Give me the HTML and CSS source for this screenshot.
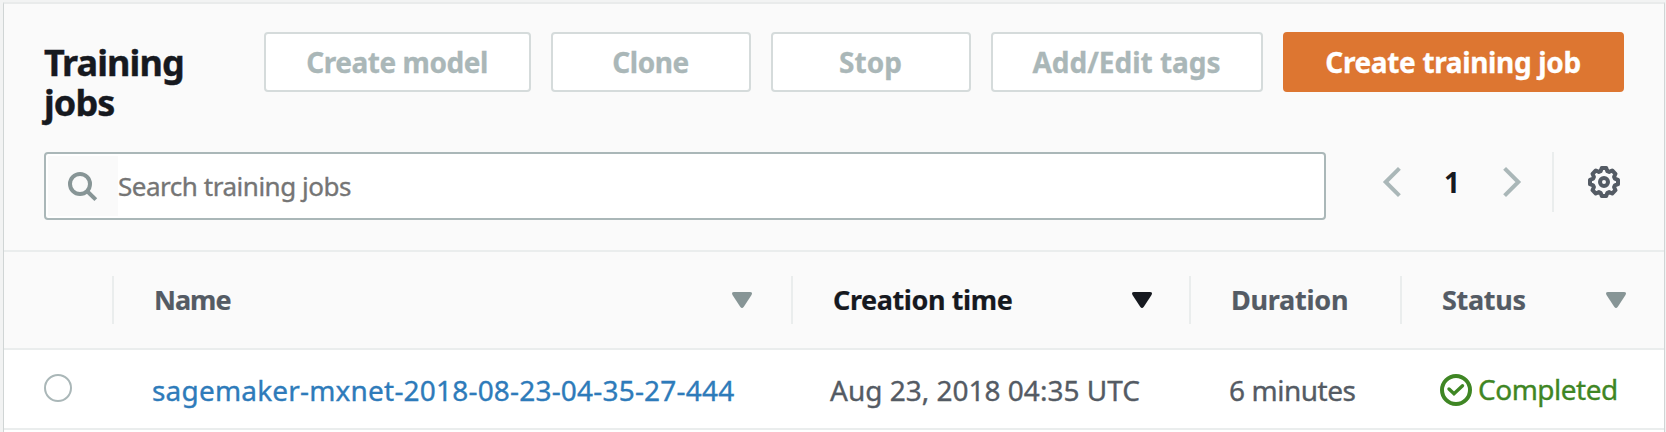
FILE: index.html
```
<!DOCTYPE html>
<html lang="en">
<head>
<meta charset="utf-8">
<title>Training jobs</title>
<link rel="stylesheet" href="styles.css">
</head>
<body>
<main class="panel">
  <header class="toolbar">
    <div class="top">
      <h1 class="title">Training jobs</h1>
      <div class="actions">
        <button class="btn model" disabled>Create model</button>
        <button class="btn clone" disabled>Clone</button>
        <button class="btn stop" disabled>Stop</button>
        <button class="btn tags" disabled>Add/Edit tags</button>
        <button class="btn primary">Create training job</button>
      </div>
    </div>
    <div class="tools">
      <div class="search">
        <span class="search-icon">
          <svg width="30" height="30" viewBox="0 0 30 30" fill="none" stroke="#879596" stroke-width="4"><circle cx="12" cy="12" r="10"/><path d="M19.2 19.2l8.6 8.4"/></svg>
        </span>
        <input class="search-input" type="text" placeholder="Search training jobs">
      </div>
      <nav class="pager">
        <svg class="prev" width="18" height="30" viewBox="0 0 18 30" fill="none" stroke="#aab7b8" stroke-width="4"><path d="M16.4 1.3L2.7 15l13.7 13.7"/></svg>
        <span class="page">1</span>
        <svg class="next" width="18" height="30" viewBox="0 0 18 30" fill="none" stroke="#aab7b8" stroke-width="4"><path d="M1.6 1.3L15.3 15 1.6 28.7"/></svg>
      </nav>
      <div class="settings">
        <svg width="32" height="32" viewBox="0 0 32 32" fill="none" stroke="#545b64" stroke-width="4" stroke-linejoin="round"><path d="M13.8 2h4.4l1.2 3.2 1.7.7 3.1-1.4 3.3 3.3-1.4 3.1.7 1.7L30 13.8v4.4l-3.2 1.2-.7 1.7 1.4 3.1-3.3 3.3-3.1-1.4-1.7.7L18.2 30h-4.4l-1.2-3.2-1.7-.7-3.1 1.4-3.3-3.3 1.4-3.1-.7-1.7L2 18.2v-4.4l3.2-1.2.7-1.7-1.4-3.1 3.3-3.3 3.1 1.4 1.7-.7z"/><circle cx="16" cy="16" r="4"/></svg>
      </div>
    </div>
  </header>
  <div class="row head">
    <div class="cell"></div>
    <div class="cell name"><span>Name</span><svg class="sort" width="20" height="16" viewBox="0 0 20 16"><path d="M2 0h16q3 0 1.500 3l-7.700 11.800q-1.800 2.400-3.600 0L.5 3Q-1 0 2 0z"/></svg></div>
    <div class="cell created"><span>Creation time</span><svg class="sort" width="20" height="16" viewBox="0 0 20 16"><path d="M2 0h16q3 0 1.500 3l-7.700 11.800q-1.800 2.400-3.600 0L.5 3Q-1 0 2 0z"/></svg></div>
    <div class="cell duration"><span>Duration</span></div>
    <div class="cell status"><span>Status</span><svg class="sort" width="20" height="16" viewBox="0 0 20 16"><path d="M2 0h16q3 0 1.500 3l-7.700 11.800q-1.800 2.400-3.600 0L.5 3Q-1 0 2 0z"/></svg></div>
  </div>
  <div class="row job">
    <div class="select"><span class="radio"></span></div>
    <a class="link">sagemaker-mxnet-2018-08-23-04-35-27-444</a>
    <div class="time">Aug 23, 2018 04:35 UTC</div>
    <div class="minutes">6 minutes</div>
    <div class="done">
      <svg width="32" height="32" viewBox="0 0 32 32" fill="none" stroke="#3f8624" stroke-width="4"><circle cx="16" cy="16" r="14"/><path d="M9 15l5 4.700 8.500-8" stroke-linecap="round" stroke-width="3.400"/></svg>
      <span>Completed</span>
    </div>
  </div>
</main>
</body>
</html>
```
FILE: styles.css
```
* { box-sizing: border-box; }

body {
  margin: 0;
  height: 432px;
  overflow: hidden;
  padding: 2px 1px 0 3px;
  background: #f2f3f3;
  font-family: "Noto Sans", sans-serif;
  font-size: 28px;
  color: #545b64;
}

svg { display: block; flex: none; overflow: visible; }

.panel {
  height: 440px;
  border: 1px solid #d0d5d5;
  border-width: 2px 1px 0;
  border-top-color: #e9ebeb;
  background: #fff;
}

.toolbar {
  height: 248px;
  padding: 28px 40px 0;
  background: #fafafa;
  border-bottom: 2px solid #eaeded;
}

.top { display: flex; justify-content: space-between; height: 120px; }

.title {
  width: 160px;
  margin: 0;
  padding-top: 11px;
  font-size: 36px;
  line-height: 40px;
  letter-spacing: -0.9px;
  color: #16191f;
  -webkit-text-stroke: 0.4px;
}

.actions { display: flex; gap: 20px; }

.btn {
  height: 60px;
  padding: 0 1px 1px 0;
  border: 2px solid #d5dbdb;
  border-radius: 4px;
  background: #fff;
  color: #aab7b8;
  font: 700 28px "Noto Sans", sans-serif;
  -webkit-text-stroke: 0.3px;
}
.model { width: 267px; letter-spacing: -0.45px; }
.clone { width: 200px; letter-spacing: -0.4px; }
.stop { width: 200px; }
.tags { width: 272px; }
.primary {
  width: 341px;
  border-color: #dd7631;
  background: #dd7631;
  color: #fff;
  letter-spacing: -0.35px;
}

.tools { display: flex; }

.search {
  display: flex;
  width: 1282px;
  height: 68px;
  padding: 2px;
  border: 2px solid #aab7b8;
  border-radius: 4px;
  background: #fff;
}
.search-icon {
  width: 70px;
  padding: 16px 0 0 20px;
  background: #fafafa;
}
.search-input {
  flex: 1;
  padding: 0;
  border: 0;
  outline: 0;
  background: transparent;
  font: 26px "Noto Sans", sans-serif;
  letter-spacing: -0.47px;
  -webkit-text-stroke: 0.35px;
}
.search-input::placeholder { color: #757575; opacity: 1; }

.pager {
  display: flex;
  align-items: center;
  justify-content: space-between;
  width: 138px;
  height: 60px;
  margin-left: 57px;
}
.page { padding-bottom: 1px; color: #16191f; font-weight: 700; }

.settings {
  display: flex;
  align-items: center;
  height: 60px;
  margin-left: 31px;
  padding-left: 34px;
  border-left: 2px solid #eaeded;
}

.row {
  display: grid;
  grid-template-columns: 108px 679px 398px 211px 264px;
  border-bottom: 2px solid #eaeded;
}

.head {
  height: 98px;
  align-items: center;
  background: #fafafa;
  font-size: 27px;
  font-weight: 700;
  -webkit-text-stroke: 0.2px;
}
.cell {
  display: flex;
  align-items: center;
  justify-content: space-between;
  height: 48px;
}
.cell span { padding-bottom: 2px; }
.cell + .cell { padding: 0 39px 0 40px; border-left: 2px solid #eaeded; }
.sort { fill: #879596; }
.cell.name { letter-spacing: -1px; }
.cell.created { padding-right: 37px; color: #16191f; letter-spacing: -0.4px; }
.created .sort { fill: #16191f; }
.cell.duration { letter-spacing: -0.25px; }
.cell.status { padding-right: 38px; letter-spacing: -0.3px; }

.job {
  height: 80px;
  padding-top: 2px;
  line-height: 76px;
  -webkit-text-stroke: 0.35px;
}
.select { padding: 22px 0 0 40px; }
.radio {
  display: block;
  width: 28px;
  height: 28px;
  border: 2px solid #aab7b8;
  border-radius: 50%;
}
.link { padding-left: 40px; color: #2e7bba; letter-spacing: 0.19px; white-space: nowrap; }
.time { padding-left: 39px; }
.minutes { padding-left: 40px; letter-spacing: -0.45px; }
.done {
  display: flex;
  align-items: flex-start;
  gap: 6px;
  padding-left: 40px;
  color: #3f8624;
  letter-spacing: -0.5px;
}
.done svg { margin-top: 22px; }
.done span { margin-top: -1px; }
```
